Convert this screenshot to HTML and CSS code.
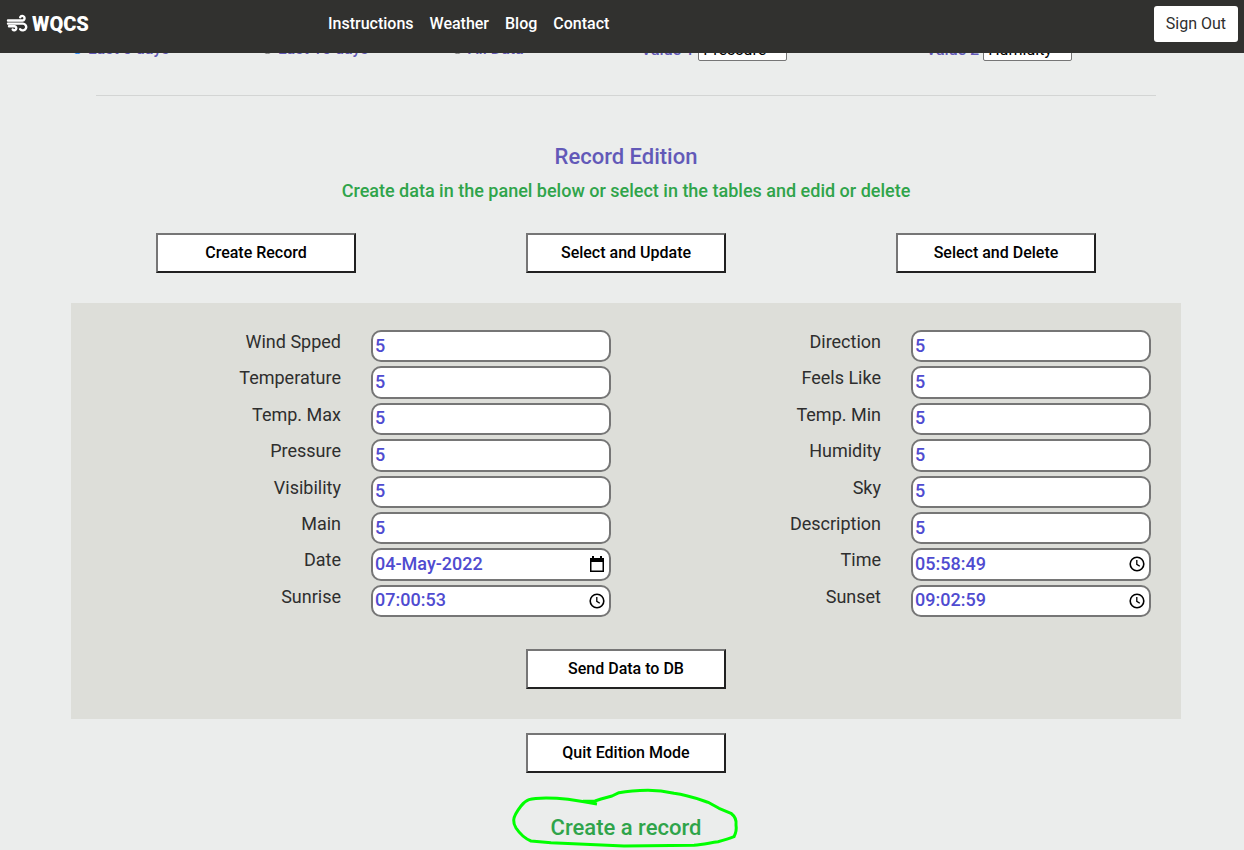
FILE: index.html
```html
<!DOCTYPE html>
<html lang="en">
<head>
<meta charset="utf-8">
<meta name="viewport" content="width=device-width, initial-scale=1">
<title>WQCS</title>
<link rel="stylesheet" href="styles.css">
</head>
<body>
<svg width="0" height="0" class="sprite" aria-hidden="true">
  <symbol id="calendar" viewBox="0 0 16 18"><path fill="currentColor" fill-rule="evenodd" d="M3 1h2v2h6V1h2v2h2v14H1V3h2zM2.500 7v8.500h11V7z"/></symbol>
  <symbol id="clock" viewBox="0 0 16 16"><circle cx="8" cy="8" r="6.800" fill="none" stroke="currentColor" stroke-width="1.600"/><path d="M7.800 4v4.300l3 2" fill="none" stroke="currentColor" stroke-width="1.300"/></symbol>
</svg>
<header class="navbar">
  <a class="brand" href="#">
    <svg class="brand-icon" viewBox="0 0 22 20" aria-hidden="true"><g fill="none" stroke="currentColor" stroke-width="2.400" stroke-linecap="round"><path d="M2 6.500H16.500a2.300 2.300 0 1 0-2.300-3.300"/><path d="M2 9.600H17a3.400 3.400 0 1 1-2.800 5.600"/><path d="M3 12.300H8.500a2 2 0 1 1-1.800 3.200"/></g></svg>
    WQCS
  </a>
  <nav class="links">
    <a href="#">Instructions</a>
    <a href="#">Weather</a>
    <a href="#">Blog</a>
    <a href="#">Contact</a>
  </nav>
  <button class="sign-out" type="button">Sign Out</button>
</header>
<main class="container">
  <div class="filters">
    <div class="ranges">
      <label><input type="radio" name="range" checked> Last 5 days</label>
      <label><input type="radio" name="range"> Last 15 days</label>
      <label><input type="radio" name="range"> All Data</label>
    </div>
    <div class="values">
      <label>Value 1 <select><option>Pressure</option></select></label>
      <label>Value 2 <select><option>Humidity</option></select></label>
    </div>
  </div>
  <hr class="divider">
  <h2 class="title">Record Edition</h2>
  <p class="hint">Create data in the panel below or select in the tables and edid or delete</p>
  <div class="modes">
    <button class="action" type="button">Create Record</button>
    <button class="action" type="button">Select and Update</button>
    <button class="action" type="button">Select and Delete</button>
  </div>
  <form class="panel">
    <div class="fields">
      <label for="wind">Wind Spped</label><div class="field"><input id="wind" value="5"></div>
      <label for="direction">Direction</label><div class="field"><input id="direction" value="5"></div>
      <label for="temp">Temperature</label><div class="field"><input id="temp" value="5"></div>
      <label for="feels">Feels Like</label><div class="field"><input id="feels" value="5"></div>
      <label for="tmax">Temp. Max</label><div class="field"><input id="tmax" value="5"></div>
      <label for="tmin">Temp. Min</label><div class="field"><input id="tmin" value="5"></div>
      <label for="pressure">Pressure</label><div class="field"><input id="pressure" value="5"></div>
      <label for="humidity">Humidity</label><div class="field"><input id="humidity" value="5"></div>
      <label for="visibility">Visibility</label><div class="field"><input id="visibility" value="5"></div>
      <label for="sky">Sky</label><div class="field"><input id="sky" value="5"></div>
      <label for="main">Main</label><div class="field"><input id="main" value="5"></div>
      <label for="description">Description</label><div class="field"><input id="description" value="5"></div>
      <label for="date">Date</label><div class="field"><input id="date" value="04-May-2022"><button class="picker date-picker" type="button" aria-label="Pick date"><svg><use href="#calendar"/></svg></button></div>
      <label for="time">Time</label><div class="field"><input id="time" value="05:58:49"><button class="picker" type="button" aria-label="Pick time"><svg><use href="#clock"/></svg></button></div>
      <label for="sunrise">Sunrise</label><div class="field"><input id="sunrise" value="07:00:53"><button class="picker" type="button" aria-label="Pick sunrise"><svg><use href="#clock"/></svg></button></div>
      <label for="sunset">Sunset</label><div class="field"><input id="sunset" value="09:02:59"><button class="picker" type="button" aria-label="Pick sunset"><svg><use href="#clock"/></svg></button></div>
    </div>
    <button class="action" type="button">Send Data to DB</button>
  </form>
  <div class="footer">
    <button class="action" type="button">Quit Edition Mode</button>
    <h3 class="status">Create a record
      <svg class="scribble" viewBox="0 0 230 60" aria-hidden="true"><path d="M86 16L73 13.700L57 11.300C50 10.500 42 10 35 10Q23 10 18 11.700Q14 13 10 18Q3 27 2.700 32Q2.500 36 5 40C9 46 15 51 20 53L40 54.700L113 58L183 57.300C192 56.500 198 55 207 53.700Q217 51 223 48.700Q226 43 225 37Q226 30 220 25.300L208 20.300L198 14.700C187 11 177 7 163 5.300C153 3 145 2.300 137 2.300C126 2.500 115 3.500 108 4.700L101 8L90 11L84 13L72 13.200" fill="none" stroke="#00ff00" stroke-width="3" stroke-linejoin="round"/></svg>
    </h3>
  </div>
</main>
</body>
</html>
```
FILE: styles.css
```css
* { box-sizing: border-box; }
body {
  margin: 0;
  min-height: 100vh;
  background: #ebedec;
  color: #2e2e2e;
  font: 500 16px/24px Roboto, sans-serif;
}
.sprite { position: absolute; }
button, input, select { font: inherit; }

.navbar {
  position: fixed;
  top: 0;
  left: 0;
  right: 0;
  z-index: 2;
  display: flex;
  align-items: center;
  height: 53px;
  padding: 0 6px 5px;
  background: #31312f;
  color: #fff;
}
.navbar a { color: inherit; text-decoration: none; }
.brand {
  display: flex;
  align-items: center;
  gap: 4px;
  width: 322px;
  font-size: 20px;
  font-weight: 900;
}
.brand-icon { width: 22px; height: 20px; }
.links { display: flex; gap: 16px; }
.sign-out {
  height: 36px;
  margin-left: auto;
  padding: 0 12px;
  border: 0;
  border-radius: 3px;
  background: #fff;
  color: #2e2e2e;
  font-weight: 400;
}

.container {
  max-width: 1110px;
  margin: 0 auto;
  padding: 37px 0 8px;
  position: relative;
  left: 4px;
}
.filters {
  display: grid;
  grid-template-columns: 1fr 1fr;
  gap: 30px;
  color: #6259b8;
}
.ranges { display: grid; grid-template-columns: repeat(3, 1fr); margin-right: -30px; }
.values { display: grid; grid-template-columns: 1fr 1fr; margin-right: -30px; }
.filters input { width: 13px; height: 13px; margin: 0; }
.filters select {
  width: 89px;
  height: 24px;
  padding: 0 4px;
  border: 1px solid #767676;
  border-radius: 2px;
  background: #fff;
  color: #000;
  appearance: none;
  font-weight: 400;
}
.divider { margin: 33px 25px 48px; border: 0; border-top: 1px solid #d3d5d4; }
.title {
  margin: 0;
  color: #6259b8;
  font-size: 22px;
  font-weight: 500;
  line-height: 26px;
  text-align: center;
}
.hint { margin: 9px 0 30px; color: #2fa44a; font-size: 18px; text-align: center; }
.modes { display: grid; grid-template-columns: repeat(3, 1fr); justify-items: center; }
.action {
  width: 200px;
  height: 40px;
  border: 2px solid;
  border-color: #767676 #212121 #212121 #767676;
  background: #fff;
  color: #000;
}
.panel {
  display: flex;
  flex-direction: column;
  align-items: center;
  gap: 32px;
  margin-top: 30px;
  padding: 27px 30px 30px;
  background: #ddded9;
}
.fields {
  display: grid;
  grid-template-columns: repeat(4, minmax(0, 1fr));
  grid-auto-rows: 1fr;
  gap: 4px 30px;
  width: 100%;
  min-height: 287px;
  font-size: 18px;
}
.fields label { font-weight: 400; text-align: right; }
.field {
  display: flex;
  align-items: center;
  padding: 0 4px 0 2px;
  border: 2px solid #767676;
  border-radius: 10px;
  background: #fff;
}
.field input {
  flex: 1;
  min-width: 0;
  height: 26px;
  padding: 0 0 2px;
  border: 0;
  outline: 0;
  background: none;
  color: #4f4bd0;
}
.picker {
  display: flex;
  padding: 0;
  border: 0;
  background: none;
  color: #000;
}
.picker svg { width: 16px; height: 16px; }
.date-picker svg { height: 18px; }
.footer { display: flex; flex-direction: column; align-items: center; padding-top: 14px; }
.status {
  position: relative;
  margin: 42px 0 0;
  color: #2fa44a;
  font-size: 22px;
  font-weight: 500;
  line-height: 26px;
}
.scribble { position: absolute; left: -40px; top: -27px; width: 230px; height: 60px; }
```
